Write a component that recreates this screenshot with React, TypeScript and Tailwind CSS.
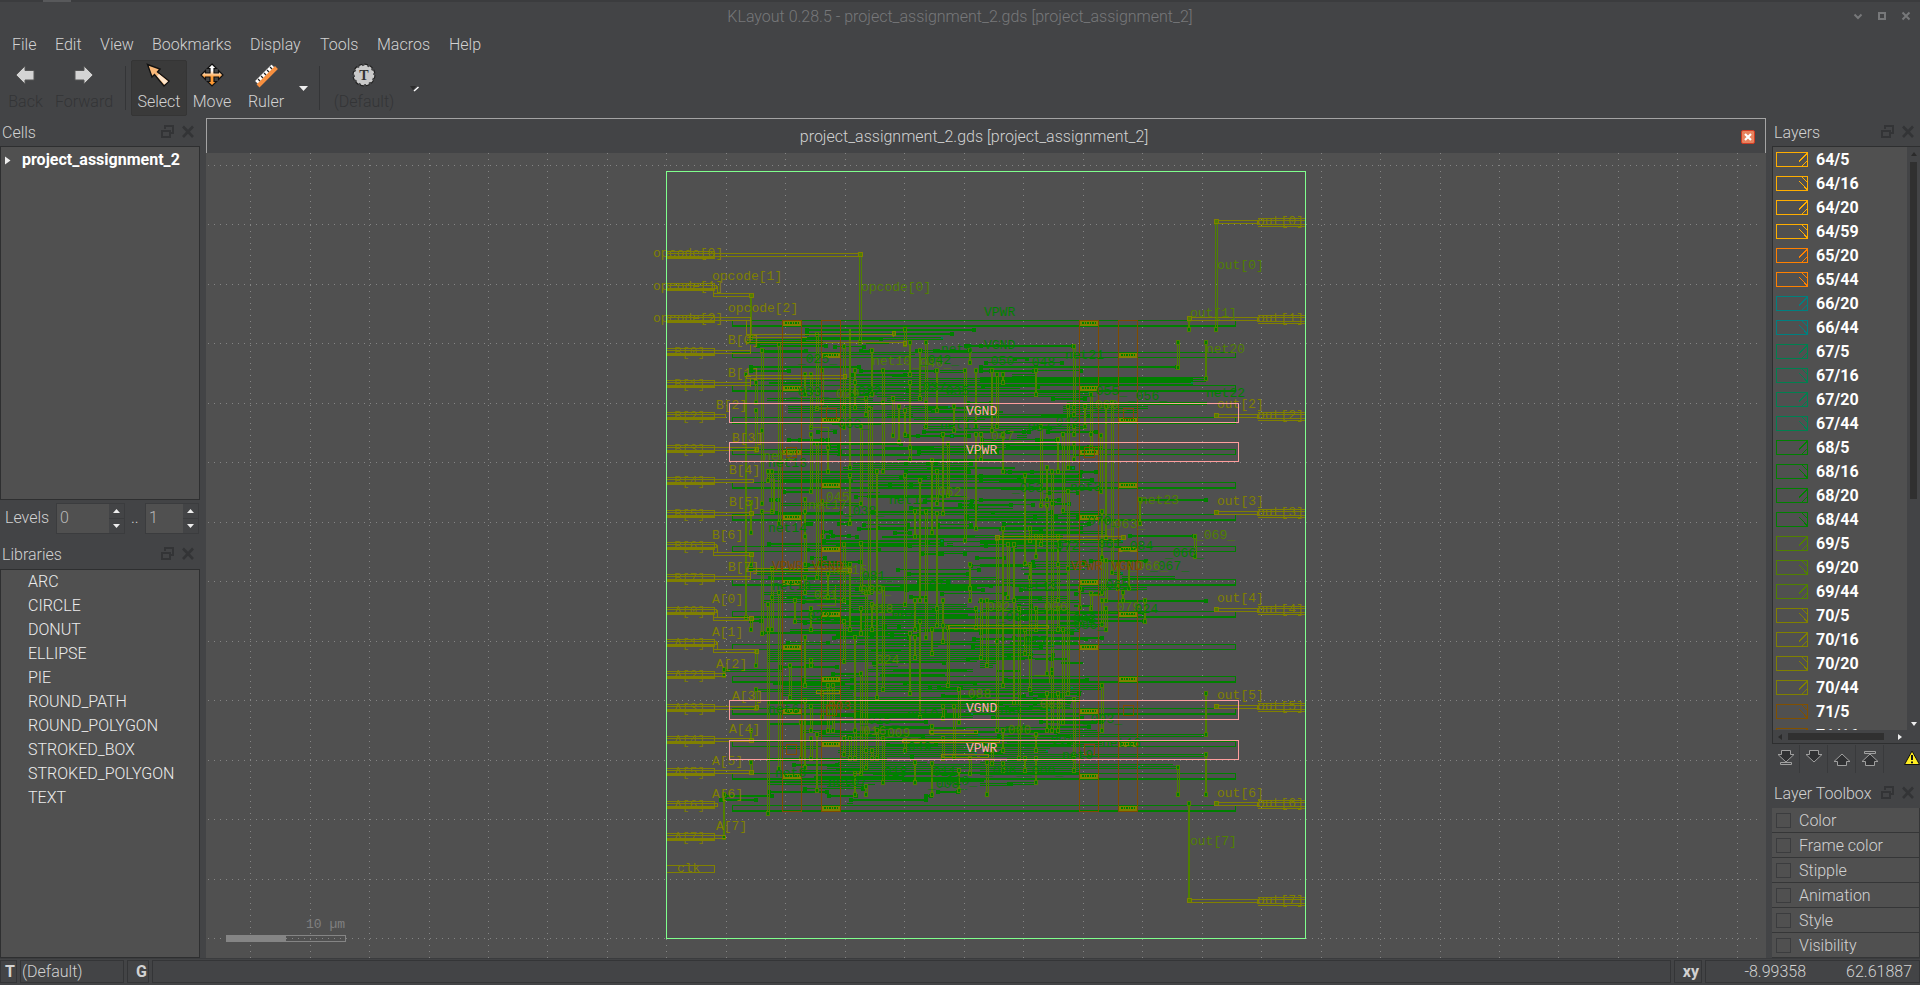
import React from "react";

const MENU: [string, string][] = [
  ["File", "w-[43px]"], ["Edit", "w-[45px]"], ["View", "w-[52px]"], ["Bookmarks", "w-[98px]"],
  ["Display", "w-[70px]"], ["Tools", "w-[57px]"], ["Macros", "w-[72px]"], ["Help", "w-[40px]"],
];
const LIBS = ["ARC", "CIRCLE", "DONUT", "ELLIPSE", "PIE", "ROUND_PATH", "ROUND_POLYGON", "STROKED_BOX", "STROKED_POLYGON", "TEXT"];
const LAYERS = "64/5 64/16 64/20 64/59 65/20 65/44 66/20 66/44 67/5 67/16 67/20 67/44 68/5 68/16 68/20 68/44 69/5 69/20 69/44 70/5 70/16 70/20 70/44 71/5 71/16".split(" ");
const COLORS: Record<string, string> = {
  "64": "#ffae00", "65": "#ff8000", "66": "#008080", "67": "#008050", "68": "#008000",
  "69": "#508000", "70": "#808000", "71": "#805000",
};
const TOOLBOX = ["Color", "Frame color", "Stipple", "Animation", "Style", "Visibility"];

const GREEN = "#008000";
const LIME = "#508000";
const OLIVE = "#808000";
const BROWN = "#804c00";

/* Vertical wires per tile: origin, then "x y1 y2" in thirds of a pixel; a trailing "t" marks a solid wire. */
const VERTICAL: [number, number, string][] = [
  [640, 150, "661 315 575,334 437 562t,630 538 950t,531 551 773,417 583 1120,366 600 840,366 840 1060,318 673 1400t,350 697 757,350 781 900,497 673 733t,514 673 830,548 660 757,612 588 770,612 770 830,645 660 697t,645 697 770t,696 600 733t,678 745 793,688 775 1327,663 829 1060,729 660 757,729 757 963,711 963 1640t,761 745 855,777 769 873t,795 538 582,795 781 853t,810 575 673t,810 697 890t,810 890 928,842 600 745t,859 575 757,859 757 829,891 660 781t,891 963 1060,909 853 1088t,924 880 1036,942 769 840t,975 660 1170,990 600 636t,1008 660 829t,1008 853 1133t,398 963 1082,514 853 1024,531 880 1280,565 890 963t,384 963 990,630 975 1120t,795 975 1363,876 930 1145t"],
  [980, 150, "709 216 538,627 508 538t,594 575 650,678 575 685t,282 587 770,282 770 793,282 829 853,282 880 928,36 660 840t,53 673 829,69 673 697t,69 853 963t,168 660 733t,315 769 829t,333 733 853,333 853 890,266 769 950,183 829 1065,234 867 963t,249 853 1080,201 951 1047t,216 963 1060,135 975 1240t,364 855 1024,380 769 1160t,398 757 1265,3 853 928"],
  [640, 480, "334 65 155t,366 92 458,384 373 447,384 447 1000,398 265 350,398 350 447,417 337 863,333 223 253,333 415 447,350 514 555,350 628 683,252 568 585t,450 555 652,465 360 422t,497 57 92,497 92 168t,497 168 253,497 290 337,497 471 616t,514 385 447t,514 540 555,514 677 750,548 62 168,548 640 710,565 280 350t,579 616 750,565 616 750,612 192 360,612 422 543,630 253 447t,645 471 750t,663 190 325,663 385 458t,663 580 880,678 337 810,696 373 447t,729 325 628,810 458 640t,826 92 168t,826 360 447t,826 471 531t,842 0 360t,842 422 710t,859 92 350,859 360 471,876 447 519t,891 98 385t,891 385 435,909 360 435t,909 435 483t,909 677 713,924 440 615,957 628 725,942 677 830,990 253 325t,990 325 360,1008 385 440"],
  [980, 480, "3 360 530,21 360 555,53 173 483,53 483 750,69 143 615t,86 192 350,102 192 360t,102 360 665t,118 385 835,150 143 180,150 253 290,150 290 530,135 447 519,150 530 628,168 168 228t,168 385 447,183 168 192,201 75 580t,201 640 750t,216 70 568,216 580 750,234 168 253t,234 253 360,234 385 447,234 640 750,249 447 725,266 34 265,266 265 640,282 658 835,300 325 380t,333 340 385,366 94 230t,366 230 337,366 360 433,366 615 750,380 240 360,380 385 447,414 253 325,430 337 360t,447 253 325t,480 57 130t,495 360 422t,645 168 228,678 640 763t"],
  [640, 700, "483 65 175,497 0 200t,514 114 175,531 103 271t,333 90 120t,333 187 216,252 283 412t,612 114 163,630 114 175,645 90 175,645 220 283t,696 150 175,711 90 175,729 114 247,678 150 200,678 258 283,795 120 151,826 187 247t,876 78 96,876 190 283t,909 114 175,957 211 271t,990 175 220"],
  [980, 700, "69 90 150t,168 103 151t,168 175 247t,282 175 211,678 163 283t,594 200 283,627 310 600t,135 175 211t,21 187 283,36 150 190,69 190 211"],
];

/* Horizontal wires: "y x1 x2" in thirds of a pixel. */
const HORIZONTAL: [number, number, string][] = [
  [640, 150, "538 497 1005t,551 497 940t,563 320 910,575 320 550,587 350 560t,600 366 500t,600 660 696t,600 828 842t,600 890 990t,587 975 1302t,648 330 660t,660 330 450t,660 660 890t,660 900 975,673 756 855,684 330 1658,690 600 1658,697 645 1658,715 600 1140,733 710 1300,745 380 700,745 740 850,757 545 760,769 443 700,781 443 790,781 795 940,793 740 820,769 795 930,829 850 940,843 850 1170t,855 795 910t,867 443 550t,855 800 940t,890 565 600t,890 810 1390,928 770 990,951 610 990,963 384 710t,963 795 990t,939 640 990,975 384 1325,981 400 1320"],
  [980, 150, "587 0 282t,648 0 594t,683 0 678,689 0 678,660 0 165t,673 95 168,733 165 333,727 168 330,769 248 505,781 250 470,757 260 680,793 0 282,829 0 315,843 80 135t,855 110 140,867 168 234t,843 201 350t,880 0 240t,890 80 330t,963 69 350t,975 0 302t,987 0 340t,951 266 282t,867 0 69"],
  [640, 480, "34 430 515t,46 680 925,58 390 417t,70 420 663,82 810 1010t,94 695 1240t,130 500 515t,130 595 630t,143 711 1325t,155 545 575t,167 575 630t,167 826 1270,180 550 910t,191 384 910t,191 920 940,253 500 630t,265 330 500t,277 350 630,292 400 1010,322 480 1010,325 645 1010,337 370 700,349 395 500,349 810 860t,361 370 700,373 600 980,385 540 1008,390 630 1020,410 540 1008,422 330 366t,422 465 910,434 610 1020,447 450 1310,458 366 740t,458 740 820,471 580 810t,483 650 1020,513 384 1180,519 384 1180,525 384 1180,531 384 1130,537 384 1010,555 500 520t,567 252 430,567 680 1000,580 575 665t,616 430 1300,622 510 1300,628 350 960,640 430 640,652 450 1020,665 384 1200,677 500 1008"],
  [980, 480, "58 0 240t,58 480 680t,70 216 270t,94 245 366,130 69 330t,155 150 380,167 447 645t,180 0 430,191 86 240t,191 0 90,240 330 500t,253 0 330,277 395 430,290 425 585,322 300 500,340 330 370t,349 100 260,361 0 300,361 366 680t,385 10 270,397 118 495t,410 0 300,422 330 495t,434 0 366,447 234 300,458 0 280t,471 100 370t,492 60 220,531 0 135,543 0 50,555 0 40,616 0 366,622 0 366,640 150 300t,652 118 300,658 100 300,677 0 270"],
  [640, 700, "5 384 1150t,17 870 990,41 640 1000,53 640 1000,65 480 860t,78 720 876t,90 490 600,103 530 1020,114 610 1020,127 790 1010,139 600 1010,151 595 1010,157 600 1010,163 610 1010,175 384 740,187 595 860,193 740 1600,199 560 1500,211 480 960,217 700 960,232 650 960,238 384 840,247 384 650,259 560 680,273 384 565t,273 890 957t,285 252 400t,285 565 650t,285 855 876t,297 240 350t,297 630 862t,309 620 640"],
  [980, 700, "5 30 270t,17 0 200,29 0 210,53 35 310t,65 180 366t,78 200 330t,90 80 350,103 250 678,97 230 360,109 0 240,127 80 366,139 0 210,151 60 205,163 0 678,175 80 282,187 0 282,199 0 594,205 0 300,217 0 300,247 80 168,251 0 100"],
];

const LABELS: [string, number, number, string][] = [
  ["opcode[0]", 653, 258, OLIVE], ["opcode[1]", 653, 291, OLIVE], ["opcode[2]", 653, 323, OLIVE],
  ["opcode[1]", 712, 281, OLIVE], ["opcode[2]", 728, 313, OLIVE], ["opcode[0]", 861, 292, LIME],
  ["B[0]", 728, 345, OLIVE], ["B[1]", 728, 378, OLIVE], ["B[2]", 716, 410, OLIVE], ["B[3]", 732, 443, OLIVE],
  ["B[4]", 729, 475, OLIVE], ["B[5]", 729, 507, OLIVE], ["B[6]", 712, 540, OLIVE], ["B[7]", 728, 572, OLIVE],
  ["A[0]", 712, 604, OLIVE], ["A[1]", 712, 637, OLIVE], ["A[2]", 716, 669, OLIVE], ["A[3]", 732, 701, OLIVE],
  ["A[4]", 729, 734, OLIVE], ["A[5]", 712, 766, OLIVE], ["A[6]", 712, 799, OLIVE], ["A[7]", 716, 831, OLIVE],
  ["clk", 677, 873, OLIVE],
  ["out[0]", 1217, 270, LIME], ["out[1]", 1190, 318, LIME], ["out[2]", 1217, 409, OLIVE], ["out[3]", 1217, 506, OLIVE],
  ["out[4]", 1217, 603, OLIVE], ["out[5]", 1217, 700, OLIVE], ["out[6]", 1217, 798, OLIVE], ["out[7]", 1190, 846, LIME],
  ["net20", 1206, 354, LIME], ["net22", 1206, 398, GREEN], ["net23", 1140, 505, LIME], ["_069_", 1196, 540, LIME],
  ["_066_", 1165, 558, GREEN], ["_067_", 1150, 571, GREEN], ["_066_", 1129, 571, LIME], ["VPWR", 984, 317, GREEN],
  ["VGND", 984, 350, GREEN], ["_050_", 983, 366, GREEN], ["_048_", 1024, 367, GREEN], ["net21", 1065, 360, GREEN],
  ["_055_", 1088, 396, GREEN], ["_056_", 1128, 401, GREEN], ["_060_", 1087, 410, LIME], ["_057_", 1020, 432, GREEN],
  ["_047_", 983, 441, LIME], ["_043_", 1048, 427, GREEN], ["_025_", 798, 364, GREEN], ["net10", 872, 366, LIME],
  ["_040_", 912, 368, LIME], ["_042_", 920, 365, GREEN], ["_033_", 790, 397, GREEN], ["_029_", 828, 399, LIME],
  ["_032_", 850, 396, GREEN], ["_037_", 915, 392, GREEN], ["_035_", 938, 396, GREEN], ["net5", 941, 354, GREEN],
  ["net11", 940, 430, GREEN], ["net2", 763, 461, LIME], ["net13", 768, 468, GREEN], ["_063_", 830, 429, GREEN],
  ["_053_", 1012, 493, GREEN], ["net3", 1070, 492, GREEN], ["_045_", 818, 502, LIME], ["net17", 808, 510, LIME],
  ["_038_", 845, 516, GREEN], ["net12", 889, 505, GREEN], ["_062_", 930, 497, LIME], ["net14", 768, 533, GREEN],
  ["_072_", 1048, 551, GREEN], ["_061_", 1090, 549, GREEN], ["_084_", 1122, 551, GREEN], ["_070_", 1080, 526, GREEN],
  ["_063_", 1106, 529, LIME], ["net15", 828, 575, LIME], ["_081_", 854, 581, GREEN], ["_080_", 852, 595, LIME],
  ["net18", 772, 591, GREEN], ["_021_", 806, 600, LIME], ["_074_", 921, 590, GREEN], ["net13", 1018, 592, GREEN],
  ["_065_", 1098, 590, GREEN], ["_018_", 862, 614, LIME], ["_087_", 884, 620, GREEN], ["_022_", 800, 621, GREEN],
  ["_082_", 979, 612, LIME], ["_036_", 1036, 612, LIME], ["_079_", 1109, 612, LIME], ["_024", 1127, 614, GREEN],
  ["_082_", 998, 622, GREEN], ["_083_", 1065, 624, GREEN], ["_086_", 1066, 630, GREEN], ["_077_", 1016, 646, GREEN],
  ["_024_", 868, 665, LIME], ["_088_", 960, 699, LIME], ["_085_", 1032, 709, LIME], ["_003_", 820, 711, BROWN],
  ["net6", 768, 714, GREEN], ["_015_", 860, 725, GREEN], ["net0", 907, 719, GREEN], ["net", 1000, 715, GREEN],
  ["_009_", 879, 738, LIME], ["_016_", 855, 736, LIME], ["_049_", 900, 752, GREEN], ["net8", 775, 778, GREEN],
  ["_018_", 876, 777, GREEN], ["_011_", 925, 777, GREEN], ["_008_", 928, 789, GREEN], ["_010_", 938, 786, GREEN],
  ["net07", 828, 787, GREEN], ["net", 1005, 734, GREEN], ["_003_", 1083, 724, GREEN], ["_000_", 1000, 735, LIME],
  ["_006_", 985, 776, GREEN], ["_000_", 1024, 776, GREEN], ["_004_", 1043, 745, GREEN], ["net16", 1102, 748, GREEN],
  ["net9", 1062, 760, GREEN], ["VPWR", 772, 571, BROWN], ["VGND", 812, 571, BROWN], ["VPWR", 1071, 571, BROWN], ["VGND", 1111, 571, BROWN],
  ["10 µm", 306, 929, "#808080"],
];

const PIN_NAMES = ["", "", "", "B[0]", "B[1]", "B[2]", "B[3]", "B[4]", "B[5]", "B[6]", "B[7]", "A[0]", "A[1]", "A[2]", "A[3]", "A[4]", "A[5]", "A[6]", "A[7]", ""];
const PIN_ENDS = [862, 716, 750, 750, 750, 725, 757, 753, 753, 716, 750, 716, 716, 725, 757, 753, 753, 717, 725, 0];
const ROWS = Array.from({ length: 16 }, (_, i) => Math.floor(320.3 + i * 32.37));

function parse(s: string) {
  return s.split(",").map((w) => {
    const thick = w.endsWith("t");
    const [a, b, c] = w.replace("t", "").split(" ").map(Number);
    return { a, b, c, thick };
  });
}

/* Short local interconnect between the cell rows, spread over the routing tracks. */
function localWires() {
  const out: { x: number; y: number; w: number; h: number; pad: boolean }[] = [];
  let seed = 4711;
  const rnd = () => {
    seed = (seed * 1103515245 + 12345) % 2147483648;
    return seed / 2147483648;
  };
  for (let t = 0; t < 112; t++) {
    const y = Math.floor(338 + t * 4.06);
    const n = t < 25 || t > 100 ? 1 : 2;
    for (let k = 0; k < n; k++) {
      const w = 14 + Math.floor(rnd() * 80);
      const x = 768 + Math.floor(rnd() * (330 - w));
      out.push({ x, y, w, h: rnd() > 0.45 ? 2 : 1, pad: rnd() > 0.5 });
    }
  }
  return out.filter((o) => o.y < 790);
}

function Box({ x, y, w, h, c }: { x: number; y: number; w: number; h: number; c: string }) {
  return <rect x={x + 0.5} y={y + 0.5} width={w} height={h} fill="none" stroke={c} />;
}

function LayoutView() {
  const grid: React.ReactNode[] = [];
  for (let i = 0; i < 26; i++) {
    const x = Math.round(250.1 + i * 59.47) + 0.5;
    grid.push(<path key={"v" + i} d={`M${x} 153V958`} strokeDasharray="1 5" />);
  }
  for (let i = 0; i < 14; i++) {
    const y = Math.round(165 + i * 59.47) + 0.5;
    grid.push(<path key={"h" + i} d={`M208 ${y}H1762`} strokeDasharray="1 5" />);
  }

  const h: React.ReactNode[] = [];
  const v: React.ReactNode[] = [];
  const pads: React.ReactNode[] = [];
  HORIZONTAL.forEach(([ox, oy, s], t) =>
    parse(s).forEach(({ a, b, c, thick }, i) => {
      const y = oy + Math.floor(a / 3);
      const x1 = ox + Math.round(b / 3);
      const x2 = ox + Math.round(c / 3);
      h.push(<rect key={`${t}-${i}`} x={x1} y={y} width={x2 - x1} height={thick ? 2 : 1} />);
      if (thick) {
        h.push(<rect key={`${t}-${i}a`} x={x1 - 1} y={y - 1} width={4} height={4} />);
        h.push(<rect key={`${t}-${i}b`} x={x2 - 3} y={y - 1} width={4} height={4} />);
      } else {
        h.push(<rect key={`${t}-${i}d`} x={x1} y={y + 2} width={x2 - x1} height={1} />);
      }
      if (i % 5 === 2) pads.push(<rect key={`${t}-${i}c`} x={x2 - 2} y={y} width={2} height={2} fill="#008050" />);
    }),
  );
  VERTICAL.forEach(([ox, oy, s], t) =>
    parse(s).forEach(({ a, b, c, thick }, i) => {
      const x = ox + Math.floor(a / 3);
      const y1 = oy + Math.round(b / 3);
      const y2 = oy + Math.round(c / 3);
      const k = `${t}-${i}`;
      if (thick) v.push(<rect key={k} x={x - 1} y={y1} width={2} height={y2 - y1} fill={LIME} />);
      else {
        v.push(<rect key={k + "l"} x={x - 1} y={y1} width={1} height={y2 - y1} fill={LIME} />);
        v.push(<rect key={k + "r"} x={x + 1} y={y1} width={1} height={y2 - y1} fill={LIME} />);
      }
      [y1, y2].forEach((y, j) => {
        if (y < 330 && x < 880 && j === 0) return;
        v.push(<rect key={k + j} x={x - 1.5} y={y - 1.5} width={3} height={4} fill={GREEN} stroke={LIME} />);
      });
    }),
  );

  return (
    <svg className="block h-[805px] w-[1560px] bg-[#505050]" viewBox="206 153 1560 805" shapeRendering="crispEdges" strokeWidth={1}>
      <g stroke="#858585" fill="none">{grid}</g>

      <g>
        {ROWS.map((y, i) => (
          <g key={y}>
            <Box x={732} y={y} w={503} h={5} c={GREEN} />
            {i % 3 !== 1 && <rect x={732} y={y + 5} width={504} height={2} fill={GREEN} />}
          </g>
        ))}
      </g>
      <g fill={GREEN}>
        {localWires().map((o, i) => (
          <g key={i}>
            <rect x={o.x} y={o.y} width={o.w} height={o.h} />
            {o.pad && <rect x={o.x - 1} y={o.y - 1} width={4} height={4} />}
            {o.pad && <rect x={o.x + o.w - 3} y={o.y - 1} width={4} height={4} />}
          </g>
        ))}
        {h}
      </g>
      {pads}
      {v}

      <g fill="none" stroke={LIME}>
        <path d="M816.5 407v1.500h11v-3.500M810.500 425v2.500h17.500v19M868 407.500h4v84M761.500 511h13v-32M1025 564.500h5.500v14M1040.500 505h6v4M1033.500 675h16v8" />
        <path d="M1095 447.500h7v18M854 773.500h6v-40M877 510h-4M1098 594.500h-8v16M1090 595.500h13M817 605h18v-20" />
      </g>

      {/* Top-level metal routing of the input pins */}
      {PIN_ENDS.map((end, i) => {
        const y = Math.floor(251.2 + i * 32.35);
        const short = end === 716;
        return (
          <g key={i}>
            <Box x={666} y={y} w={48} h={7} c={OLIVE} />
            {end > 0 && <Box x={666} y={y + 2} w={end - 666} h={3} c={OLIVE} />}
            {i < 19 && <path d={`M667 ${y + 6.5}h47`} stroke={OLIVE} />}
            {short && <Box x={713} y={y + 10} w={i === 12 ? 44 : 40} h={3} c={OLIVE} />}
            {short && <path d={`M717.500 ${y + 3}v7M713.500 ${y + 5}v5`} stroke={OLIVE} />}
            {PIN_NAMES[i] && (
              <text x={674} y={y + 8} fontSize={13} fill={OLIVE} opacity={0.85} className="font-['Liberation_Mono',monospace]">{PIN_NAMES[i]}</text>
            )}
          </g>
        );
      })}
      <g fill="none" stroke={OLIVE}>
        <path d="M750.500 318v20M746.500 321v13h147v3M746.500 337h60M746.500 342.500h158M746.500 344.500v-4M750.500 345v8M750.500 378v9M746.500 374.500v4h99M746.500 375h100M746.500 568.500h104v3h-104zM750.500 572v8" />
        <path d="M997.500 536.500h127v3h-127zM948.500 625.500h100v3h-100zM929.500 730.500h48v3h-48zM902.500 739.500h97v3h-97zM941.500 754.500h47v3h-47zM816.500 690.500h23v3h-23z" />
      </g>
      <g fill={LIME} stroke={OLIVE}>
        <rect x={858.500} y={252.500} width={4} height={4} />
        <rect x={749.500} y={293.500} width={4} height={4} />
        <rect x={892.500} y={331.500} width={3} height={4} />
        <rect x={903.500} y={341.500} width={3} height={4} />
        <rect x={843.500} y={374.500} width={3} height={4} />
        <rect x={848.500} y={568.500} width={3} height={4} />
        <rect x={749.500} y={511.500} width={4} height={4} />
        <rect x={749.500} y={552.500} width={4} height={4} />
        <rect x={755.500} y={447.500} width={3} height={4} />
        <rect x={749.500} y={616.500} width={4} height={4} />
        <rect x={755.500} y={649.500} width={3} height={4} />
        <rect x={755.500} y={705.500} width={3} height={4} />
        <rect x={749.500} y={738.500} width={4} height={4} />
        <rect x={749.500} y={770.500} width={4} height={4} />
        <rect x={995.500} y={535.500} width={4} height={4} />
        <rect x={1121.500} y={535.500} width={4} height={4} />
      </g>

      {/* Output pins */}
      {[222, 319, 416, 513, 610, 707, 804, 901].map((y, i) => {
        const x0 = i === 1 || i === 7 ? 1187 : 1214;
        return (
          <g key={y}>
            <rect x={1258} y={y - 4} width={47} height={1} fill={OLIVE} />
            <rect x={1258} y={y + 4} width={47} height={1} fill={OLIVE} />
            <Box x={1257} y={y - 2} w={48} h={4} c={OLIVE} />
            <Box x={x0} y={y - 2} w={44 + (1214 - x0)} h={3} c={OLIVE} />
            <rect x={x0 + 0.5} y={y - 2.500} width={4} height={4} stroke={OLIVE} fill={LIME} />
            <text x={1257} y={y + 3} fontSize={13} fill={OLIVE} className="font-['Liberation_Mono',monospace]">{`out[${i}]`}</text>
          </g>
        );
      })}

      {[782, 821, 1079, 1118].map((x, c) => (
        <g key={x}>
          <Box x={x} y={320} w={19} h={491} c={BROWN} />
          {ROWS.filter((_, i) => i % 2 === c % 2).map((y) => (
            <g key={y}>
              <rect x={x + 1} y={y + 1} width={18} height={5} fill={OLIVE} />
              <path d={`M${x + 3} ${y + 3}h15`} stroke={GREEN} strokeWidth={2} strokeDasharray="2 1 1 1" />
            </g>
          ))}
        </g>
      ))}
      {[[826, 408], [786, 447], [1123, 408], [1084, 447], [826, 705], [786, 744], [1123, 705], [1084, 744]].map(([x, y]) => (
        <Box key={`${x}-${y}`} x={x} y={y} w={10} h={10} c={BROWN} />
      ))}

      {LABELS.map(([s, x, y, c], i) => (
        <text key={i} x={x} y={y - 1} fontSize={13} fill={c} className="font-['Liberation_Mono',monospace]" xmlSpace="preserve">{s}</text>
      ))}

      {[403, 442, 700, 740].map((y, i) => (
        <g key={y}>
          <Box x={729} y={y} w={509} h={19} c="#ff9e9e" />
          <text x={966} y={y + 12} fontSize={13} fill="#ffb0a8" className="font-['Liberation_Mono',monospace]">{i % 2 ? "VPWR" : "VGND"}</text>
        </g>
      ))}

      <Box x={666} y={171} w={639} h={767} c="#80ff8d" />
      <rect x={226} y={935} width={60} height={7} fill="#858585" />
      <Box x={226} y={935} w={119} h={6} c="#858585" />
    </svg>
  );
}

function PanelTitle({ children, className = "" }: { children: string; className?: string }) {
  return (
    <div className={"flex items-center justify-between pl-[2px] pr-[4px] " + className}>
      <span>{children}</span>
      <svg width="36" height="16" viewBox="0 0 36 16" fill="none" stroke="#333436" strokeWidth="2" shapeRendering="crispEdges" className="-translate-y-[1px]">
        <path d="M5 5V2h8v7h-3" />
        <path d="M2 7h8v6H2z" />
        <path d="M23 2.500L33 13M33 2.500L23 13" strokeWidth="2.600" shapeRendering="auto" />
      </svg>
    </div>
  );
}

function Spin({ value, className }: { value: string; className: string }) {
  return (
    <div className={"flex h-[31px] border border-[#3b3c3e] " + className}>
      <div className="flex flex-1 items-center bg-[#505050] pl-[3px] text-[#b8b8b8]">{value}</div>
      <div className="flex w-[15px] flex-col justify-between py-[4px]">
        <svg width="15" height="5"><path d="M4 5L7.500 1L11 5z" fill="#eee" /></svg>
        <div className="h-px bg-[#3b3c3e]" />
        <svg width="15" height="5"><path d="M4 0L7.500 4L11 0z" fill="#eee" /></svg>
      </div>
    </div>
  );
}

function Swatch({ color, back }: { color: string; back: boolean }) {
  return (
    <svg width="32" height="15" viewBox="0 0 32 15" fill="none" stroke={color} shapeRendering="crispEdges">
      <rect x="0.500" y="0.500" width="31" height="14" />
      <path d={back ? "M23 5L32 14.500M25 0L32 7" : "M23 9.500L32 0.500M25 15L32 8"} />
    </svg>
  );
}

function MoveButton({ down, bar }: { down: boolean; bar: boolean }) {
  return (
    <div className="flex h-[28px] w-[28px] items-center justify-center border-r border-[#393a3c]">
      <svg width="20" height="20" viewBox="0 0 20 20" fill="#303133" stroke="#a0a0a0" className={down ? "-translate-y-[1px]" : "-translate-y-[1px] rotate-180"}>
        <path d="M5.500 2.500h9v4h3.500L10 14L2 6.500h3.500z" />
        {bar && <path d="M4.500 14.500h11v2h-11z" fill="#434446" />}
      </svg>
    </div>
  );
}

function Toolbar() {
  return (
    <div className="flex h-[57px] items-start pt-px leading-5">
      <div className="flex w-[51px] flex-col items-center text-[#333436]">
        <svg width="24" height="30" viewBox="0 0 24 30" className="-translate-x-[1px]"><path d="M3 13L12 4V8.500H21V18H12V22z" fill="#d4d4d4" stroke="#555" /></svg>
        <span>Back</span>
      </div>
      <div className="flex w-[66px] flex-col items-center text-[#333436]">
        <svg width="24" height="30" viewBox="0 0 24 30"><path d="M21 13L12 4V8.500H3V18H12V22z" fill="#d4d4d4" stroke="#555" /></svg>
        <span>Forward</span>
      </div>
      <div className="ml-[8px] mt-[4px] h-[44px] w-px bg-[#343537]" />
      <div className="ml-[5px] -mt-[2px] flex h-[56px] w-[56px] flex-col items-center rounded-[2px] border border-[#353535] bg-[#3a3a3a] pt-px">
        <svg width="28" height="30" viewBox="0 0 28 30">
          <path d="M2.500 2.500L15 7L12.500 10L24 19L19 24L9.500 12.500L7 15z" fill="#f9b878" stroke="#111" strokeWidth="1.400" />
          <path d="M14 12L23 19.500L19.500 22.500L12 14z" fill="#fff0e0" opacity=".8" />
        </svg>
        <span>Select</span>
      </div>
      <div className="flex w-[50px] flex-col items-center">
        <svg width="28" height="30" viewBox="0 0 28 30">
          <defs><linearGradient id="mv" x2="0" y2="1"><stop offset=".3" stopColor="#fff" /><stop offset=".6" stopColor="#ff9a33" /></linearGradient></defs>
          <path d="M14 2L18.500 6.500H16V11H20.500V8.500L25 13L20.500 17.500V15H16V19.500H18.500L14 24L9.500 19.500H12V15H7.500V17.500L3 13L7.500 8.500V11H12V6.500H9.500z" fill="url(#mv)" stroke="#111" strokeWidth="1.200" />
        </svg>
        <span>Move</span>
      </div>
      <div className="flex w-[58px] flex-col items-center">
        <svg width="28" height="30" viewBox="0 0 28 30">
          <path d="M2.500 19L19.500 2L24.500 7L7.500 24z" fill="#fff" stroke="#333" />
          <path d="M6 22.500L23 5.500L24.500 7L7.500 24z" fill="#f79040" stroke="#f79040" strokeWidth="2" />
          <path d="M6 17l2 2M9 14l2 2M12 11l2 2M15 8l2 2M18 5l2 2" stroke="#222" strokeWidth="1.200" />
        </svg>
        <span>Ruler</span>
      </div>
      <svg width="9" height="6" className="ml-[4px] mt-[24px]"><path d="M0 0h9L4.500 5z" fill="#eee" /></svg>
      <div className="ml-[11px] mt-[4px] h-[44px] w-px bg-[#343537]" />
      <div className="ml-[6px] flex w-[76px] flex-col items-center text-[#333436]">
        <svg width="28" height="30" viewBox="0 0 28 30">
          <circle cx="14" cy="13" r="9.500" fill="none" stroke="#222" strokeWidth="4" strokeDasharray="3.200 1.770" />
          <circle cx="14" cy="13" r="9.300" fill="#c9c9c9" stroke="#ccc" strokeWidth="2" strokeDasharray="2.800 2.070" />
          <text x="14" y="18" textAnchor="middle" fontSize="14" fontWeight="700" fill="#333" className="font-['Liberation_Serif',serif]">T</text>
        </svg>
        <span>(Default)</span>
      </div>
      <svg width="9" height="6" className="ml-[8px] mt-[24px]"><path d="M0 0h6L3 4z" fill="#2c2c2c" /><path d="M4 5L8.500 1" stroke="#fff" strokeWidth="1.500" /></svg>
    </div>
  );
}

export default function App() {
  return (
    <div className="flex h-[985px] w-[1920px] flex-col overflow-hidden whitespace-nowrap bg-[#434446] font-[Roboto,sans-serif] text-[16px] font-light leading-6 text-[#d2d2d2]">
      <div className="flex h-[2px] shrink-0 bg-[#3b3c3e]"><div className="ml-[43px] w-[28px] bg-[#58595b]" /></div>
      <div className="grid h-[31px] shrink-0 grid-cols-[1fr_auto_1fr] items-center pb-px text-[#77787a]">
        <span />
        <span>KLayout 0.28.5 - project_assignment_2.gds [project_assignment_2]</span>
        <svg width="62" height="12" viewBox="0 0 62 12" className="mr-[8px] -translate-y-[1px] justify-self-end" fill="none" stroke="#77787a" strokeWidth="2">
          <path d="M4.500 4.500L8 8L11.500 4.500" /><path d="M29 3h6v6h-6z" /><path d="M52.500 2.500l7 7M59.500 2.500l-7 7" />
        </svg>
      </div>
      <div className="flex h-[28px] shrink-0 pl-[12px]">
        {MENU.map(([m, w]) => <span key={m} className={w}>{m}</span>)}
      </div>
      <Toolbar />

      <div className="flex h-[840px] shrink-0">
        <div className="flex w-[200px] shrink-0 flex-col">
          <PanelTitle className="h-[28px] pt-px">Cells</PanelTitle>
          <div className="h-[354px] border border-[#2e2f30] bg-[#505050]">
            <div className="flex h-[25px] items-center pt-px font-bold text-white">
              <svg width="21" height="9"><path d="M4 0.500L9.500 4.500L4 8.500z" fill="#eee" /></svg>project_assignment_2
            </div>
          </div>
          <div className="flex h-[36px] items-center pl-[5px]">
            <span className="w-[51px]">Levels</span>
            <Spin value="0" className="w-[69px]" />
            <span className="w-[20px] pl-[6px]">..</span>
            <Spin value="1" className="w-[54px]" />
          </div>
          <PanelTitle className="h-[33px] pt-[4px]">Libraries</PanelTitle>
          <div className="h-[389px] border border-[#2e2f30] bg-[#505050] pl-[27px] text-[#ececec]">
            {LIBS.map((l) => <div key={l} className="h-6">{l}</div>)}
          </div>
        </div>

        <div className="ml-[6px] w-[1560px] shrink-0">
          <div className="flex h-[35px] items-center border border-b-0 border-[#a4a4a4] pt-px">
            <span className="flex-1 text-center">project_assignment_2.gds [project_assignment_2]</span>
            <svg width="14" height="14" viewBox="0 0 14 14" className="mr-[10px]">
              <rect x="0.500" y="0.500" width="13" height="13" rx="1.500" fill="#e8835e" stroke="#d03c25" />
              <path d="M4 4l6 6M10 4l-6 6" stroke="#fff" strokeWidth="2.200" />
            </svg>
          </div>
          <LayoutView />
        </div>

        <div className="ml-[6px] flex w-[148px] shrink-0 flex-col">
          <PanelTitle className="h-[28px] pt-px">Layers</PanelTitle>
          <div className="flex h-[598px] flex-col overflow-hidden border border-r-0 border-[#2e2f30] bg-[#505050]">
            <div className="flex h-[583px]">
              <div className="h-full flex-1 overflow-hidden pl-[3px]">
                {LAYERS.map((l, i) => (
                  <div key={l} className="flex h-6 items-center gap-[8px] font-bold text-white">
                    <Swatch color={COLORS[l.slice(0, 2)]} back={i % 2 === 1} /><span className="pt-[2px]">{l}</span>
                  </div>
                ))}
              </div>
              <div className="flex w-[13px] flex-col items-center bg-[#434446] pt-[5px]">
                <svg width="6" height="4"><path d="M0 4L3 0L6 4z" fill="#2b2b2b" /></svg>
                <div className="mt-[6px] h-[337px] w-[7px] bg-[#303030]" />
                <svg width="6" height="4" className="mt-auto mb-[4px]"><path d="M0 0L3 4L6 0z" fill="#eee" /></svg>
              </div>
            </div>
            <div className="flex h-[13px] items-center bg-[#434446] pl-[5px]">
              <svg width="4" height="6"><path d="M4 0L0 3L4 6z" fill="#2b2b2b" /></svg>
              <div className="ml-[6px] h-[7px] w-[96px] bg-[#303030]" />
              <svg width="4" height="6" className="ml-[14px]"><path d="M0 0L4 3L0 6z" fill="#eee" /></svg>
            </div>
          </div>
          <div className="flex h-[30px] items-center">
            <MoveButton down bar /><MoveButton down bar={false} /><MoveButton down={false} bar={false} /><MoveButton down={false} bar />
            <svg width="16" height="16" viewBox="0 0 16 16" className="ml-[20px] -translate-y-[1px]">
              <path d="M8 1L15.500 14.500H0.500z" fill="#ffee22" stroke="#111" strokeLinejoin="round" />
              <path d="M8 5v5M8 11.500v1.800" stroke="#111" strokeWidth="2" />
            </svg>
          </div>
          <PanelTitle className="h-[34px] pt-[6px]">Layer Toolbox</PanelTitle>
          <div className="border-r border-[#353637] bg-[#505050]">
            {TOOLBOX.map((t) => (
              <div key={t} className="flex h-[25px] items-center border-b border-[#353637] pl-[4px]">
                <span className="mr-[8px] h-[15px] w-[15px] border border-[#3b3c3e]" /><span className="pt-px">{t}</span>
              </div>
            ))}
          </div>
        </div>
      </div>

      <div className="flex h-[27px] shrink-0 items-center gap-[3px] border-t border-[#3b3c3e] pt-px pb-[2px]">
        <div className="flex h-[23px] w-[17px] items-center border border-[#343537] pl-[4px] font-bold">T</div>
        <div className="flex h-[23px] w-[104px] items-center border border-[#343537] pl-px">(Default)</div>
        <div className="flex h-[23px] w-[22px] items-center border border-[#343537] pl-[8px] font-bold">G</div>
        <div className="h-[23px] w-[1519px] border border-[#343537]" />
        <div className="flex h-[23px] w-[28px] items-center justify-end border border-[#343537] pr-[2px] font-bold">xy</div>
        <div className="flex h-[23px] flex-1 items-center justify-end gap-[40px] border border-[#343537] pr-[7px]">
          <span>-8.99358</span><span>62.61887</span>
        </div>
      </div>
    </div>
  );
}
